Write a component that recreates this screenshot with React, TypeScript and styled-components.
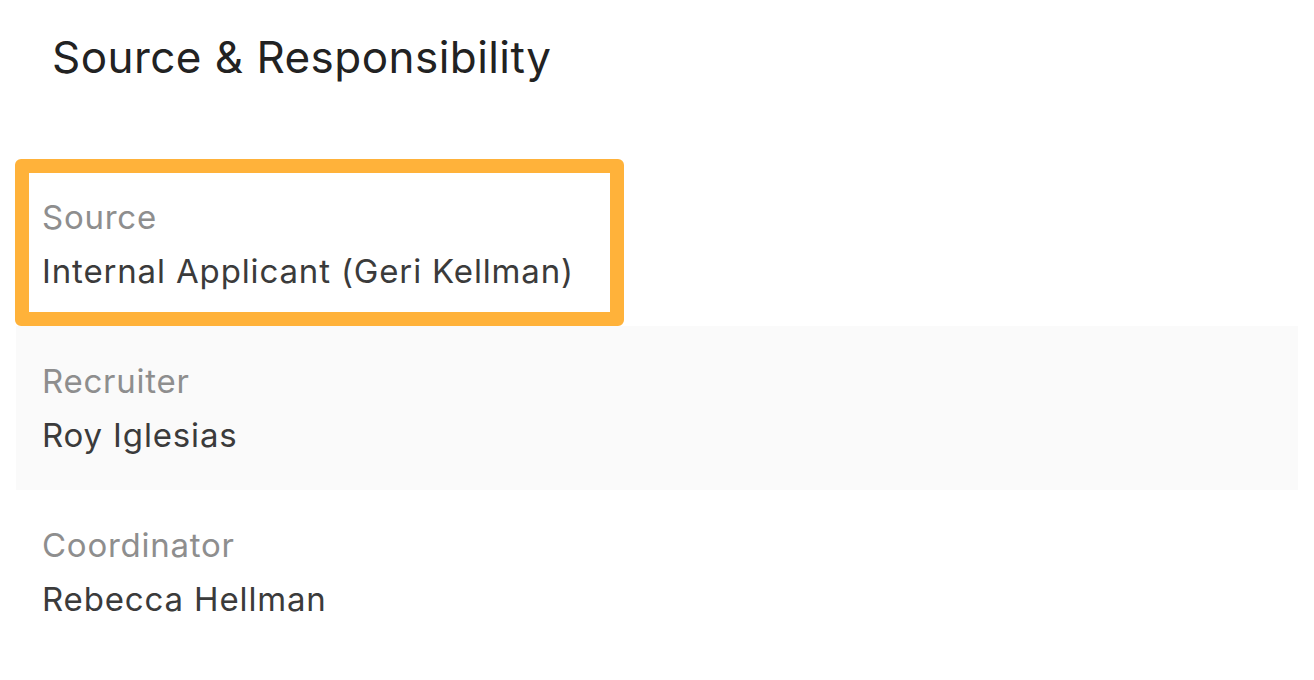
import React from 'react';
import styled, { createGlobalStyle } from 'styled-components';

type Field = {
  label: string;
  value: string;
  highlight?: boolean;
  shaded?: boolean;
};

const fields: Field[] = [
  { label: 'Source', value: 'Internal Applicant (Geri Kellman)', highlight: true },
  { label: 'Recruiter', value: 'Roy Iglesias', shaded: true },
  { label: 'Coordinator', value: 'Rebecca Hellman' },
];

const GlobalStyle = createGlobalStyle`
  html, body {
    margin: 0;
    padding: 0;
    background: #ffffff;
  }
  body {
    font-family: Inter, 'Noto Sans', 'Liberation Sans', sans-serif;
    -webkit-font-smoothing: antialiased;
  }
`;

const Page = styled.div`
  width: 1314px;
  height: 680px;
  box-sizing: border-box;
  padding: 26px 16px 0 15px;
`;

const Heading = styled.h2`
  margin: 0 0 0 37px;
  height: 133px;
  font-size: 44px;
  line-height: 62px;
  font-weight: 400;
  color: #222222;
  letter-spacing: 0.45px;
`;

const List = styled.div`
  display: flex;
  flex-direction: column;
`;

const Row = styled.div<{ $highlight?: boolean; $shaded?: boolean }>`
  display: flex;
  flex-direction: column;
  box-sizing: border-box;
  width: ${(p) => (p.$highlight ? '609px' : 'calc(100% - 1px)')};
  height: ${(p) => (p.$highlight ? '167px' : '164px')};
  padding: ${(p) => (p.$highlight ? '17px 13px 14px' : '28px 26px')};
  margin-left: ${(p) => (p.$highlight ? '0' : '1px')};
  border: ${(p) => (p.$highlight ? '14px solid #ffb23a' : 'none')};
  border-radius: ${(p) => (p.$highlight ? '6px' : '0')};
  background: ${(p) => (p.$shaded ? '#fafafa' : '#ffffff')};
`;

const Label = styled.div`
  font-size: 33px;
  line-height: 54px;
  letter-spacing: 0.75px;
  color: #8e8e8e;
`;

const Value = styled.div`
  font-size: 33px;
  line-height: 54px;
  letter-spacing: 0.85px;
  color: #3b3b3b;
  white-space: nowrap;
`;

export default function App() {
  return (
    <>
      <GlobalStyle />
      <Page>
        <Heading>Source &amp; Responsibility</Heading>
        <List>
          {fields.map((f) => (
            <Row key={f.label} $highlight={f.highlight} $shaded={f.shaded}>
              <Label>{f.label}</Label>
              <Value>{f.value}</Value>
            </Row>
          ))}
        </List>
      </Page>
    </>
  );
}
